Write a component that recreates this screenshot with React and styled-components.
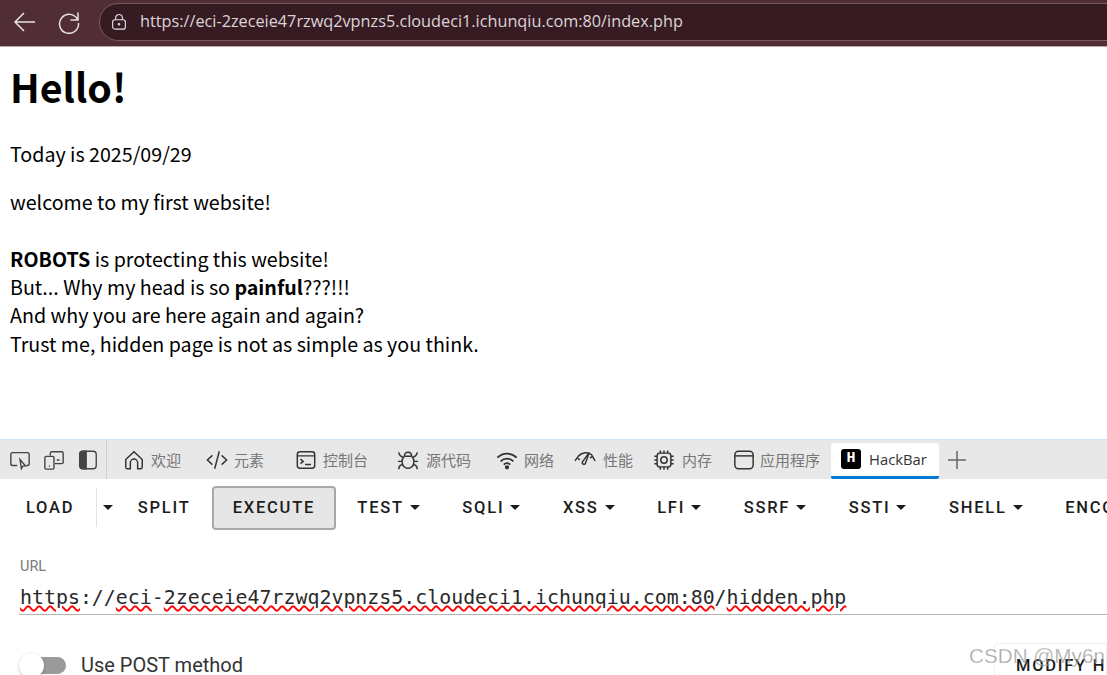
import styled, { createGlobalStyle } from "styled-components";

const Global = createGlobalStyle`
  html, body {
    margin: 0;
    padding: 0;
    background: #fff;
  }
`;

const Page = styled.div`
  position: relative;
  width: 1107px;
  height: 675px;
  overflow: hidden;
  display: flex;
  flex-direction: column;
  font-family: "Noto Sans CJK SC", "Noto Sans", sans-serif;
`;

/* browser chrome */
const AddressBar = styled.div`
  flex: none;
  height: 47px;
  box-sizing: border-box;
  display: flex;
  align-items: center;
  padding: 0 0 2px 13px;
  background: #512d35;
  border-bottom: 1px solid #b9a8ac;
  color: #e6dfe0;
`;

const NavButton = styled.div`
  display: flex;
  width: 24px;
  margin-right: 20px;
  svg {
    width: 24px;
    height: 24px;
    stroke: #e8e2e3;
    fill: none;
    stroke-width: 1.5;
  }
`;

const UrlPill = styled.div`
  flex: 1;
  height: 38px;
  box-sizing: border-box;
  margin-left: -2px;
  margin-right: -30px;
  display: flex;
  align-items: center;
  gap: 12px;
  padding-left: 10px;
  border: 1px solid #77595f;
  border-radius: 19px;
  background: #371b23;
  svg {
    width: 18px;
    height: 18px;
    stroke: #e6dfe0;
    fill: none;
    stroke-width: 1.5;
  }
`;

const UrlText = styled.span`
  padding-bottom: 3px;
  font-family: "Open Sans", sans-serif;
  font-size: 16.25px;
  color: #dcd5d6;
  white-space: nowrap;
`;

/* page body */
const Content = styled.main`
  flex: none;
  height: 392px;
  box-sizing: border-box;
  padding: 11px 10px 0;
  color: #000;
`;

const Title = styled.h1`
  margin: 0 0 26px;
  font-size: 39.3px;
  line-height: 56px;
  font-weight: 700;
`;

const Para = styled.p`
  margin: 0 0 20px;
  font-size: 19.65px;
  line-height: 28.3px;
  b {
    font-weight: 700;
  }
`;

/* devtools tab strip */
const DevTools = styled.div`
  flex: none;
  height: 40px;
  box-sizing: border-box;
  display: flex;
  align-items: stretch;
  background: #e8e8e8;
  border-top: 1px solid #cfe2fa;
`;

const ToolIcons = styled.div`
  display: flex;
  align-items: center;
  gap: 12px;
  width: 97px;
  padding-left: 9px;
  border-right: 1px solid #cfcfcf;
  svg {
    flex: none;
    width: 22px;
    height: 22px;
    fill: none;
    stroke: #444;
    stroke-width: 1.5;
  }
`;

const Tab = styled.div`
  width: ${(p) => p.$w}px;
  margin-left: ${(p) => p.$ml || 0}px;
  flex: none;
  display: flex;
  align-items: center;
  gap: ${(p) => p.$gap || 6}px;
  font-size: 15px;
  color: #777;
  svg {
    flex: none;
    width: 22px;
    height: 22px;
    fill: none;
    stroke: #333;
    stroke-width: 1.6;
  }
`;

const ActiveTab = styled.div`
  flex: none;
  width: 108px;
  box-sizing: border-box;
  margin-top: 3px;
  display: flex;
  align-items: center;
  gap: 8px;
  padding: 0 0 2px 10px;
  background: #fff;
  border-bottom: 3px solid #0078d4;
  border-radius: 3px 3px 2px 2px;
  font-family: "Open Sans", sans-serif;
  font-size: 14.8px;
  color: #333;
`;

const HackIcon = styled.span`
  flex: none;
  width: 20px;
  height: 20px;
  border-radius: 3px;
  background: #000;
  color: #fff;
  display: flex;
  align-items: center;
  justify-content: center;
  font-family: "Liberation Mono", monospace;
  font-weight: 700;
  font-size: 15px;
`;

const AddTab = styled.div`
  display: flex;
  align-items: center;
  margin-left: 8px;
  svg {
    width: 20px;
    height: 20px;
    stroke: #666;
    stroke-width: 1.5;
  }
`;

/* hackbar */
const MenuRow = styled.div`
  flex: none;
  height: 57px;
  display: flex;
  align-items: center;
  padding-left: 4.600px;
  box-sizing: border-box;
  white-space: nowrap;
`;

const MenuButton = styled.div`
  flex: none;
  height: 39px;
  display: flex;
  align-items: center;
  gap: 6px;
  padding: 0 21.300px;
  font-family: Roboto, sans-serif;
  font-weight: 500;
  font-size: 16.5px;
  letter-spacing: 1.75px;
  color: #1c1c1c;
`;

const LoadButton = styled(MenuButton)`
  border-right: 1px solid #e2e2e2;
`;

const CaretButton = styled(MenuButton)`
  padding: 0 4px 0 6px;
`;

const ExecuteButton = styled(MenuButton)`
  box-sizing: border-box;
  height: 44px;
  padding: 0 19px;
  background: #e6e6e6;
  border: 2px solid #a9a9a9;
  border-radius: 4px;
`;

const Caret = styled.i`
  width: 0;
  height: 0;
  border-left: 5px solid transparent;
  border-right: 5px solid transparent;
  border-top: 5px solid #1c1c1c;
`;

const UrlField = styled.div`
  flex: none;
  margin-left: 19px;
  height: 79px;
  box-sizing: border-box;
  padding-top: 22px;
  border-bottom: 1px solid #b4b4b4;
`;

const FieldLabel = styled.div`
  font-family: Roboto, sans-serif;
  font-size: 14.5px;
  line-height: 18px;
  color: #7a7a7a;
  padding-left: 1px;
`;

const FieldValue = styled.div`
  margin-top: 10px;
  padding-left: 1px;
  font-family: "DejaVu Sans Mono", monospace;
  font-size: 19.9px;
  line-height: 24px;
  color: #2a2a2a;
  white-space: nowrap;
`;

const Typo = styled.span`
  text-decoration: underline wavy #f00;
  text-decoration-thickness: 1.500px;
  text-underline-offset: 1px;
`;

const BottomRow = styled.div`
  flex: 1;
  display: flex;
  align-items: flex-start;
  justify-content: space-between;
  padding: 38px 0 0 19px;
`;

const PostOption = styled.div`
  display: flex;
  align-items: center;
  gap: 15px;
  font-family: Roboto, sans-serif;
  font-size: 20px;
  line-height: 24px;
  color: #333;
`;

const ToggleTrack = styled.span`
  position: relative;
  display: block;
  width: 44px;
  height: 17px;
  margin-left: 3px;
  border-radius: 9px;
  background: #9a9a9a;
`;

const ToggleThumb = styled.span`
  position: absolute;
  left: -3px;
  top: -4px;
  width: 25px;
  height: 25px;
  border-radius: 50%;
  background: #fff;
  box-shadow: 0 1px 3px rgba(0, 0, 0, 0.25);
`;

const SideCard = styled.div`
  width: 113px;
  height: 60px;
  margin-top: -10px;
  box-sizing: border-box;
  padding: 12px 0 0 21px;
  border: 1px solid #f0f0f0;
  border-radius: 4px 0 0 0;
  font-family: Roboto, sans-serif;
  font-weight: 500;
  font-size: 16.5px;
  letter-spacing: 1.75px;
  color: #1c1c1c;
  white-space: nowrap;
  overflow: hidden;
`;

const Watermark = styled.div`
  position: absolute;
  left: 969px;
  top: 642px;
  font-family: "Liberation Sans", sans-serif;
  font-size: 20.7px;
  line-height: 28px;
  color: rgba(120, 120, 120, 0.6);
  -webkit-text-stroke: 0.3px rgba(255, 255, 255, 0.6);
  white-space: nowrap;
`;

const icons = {
  home: (
    <svg viewBox="0 0 24 24">
      <path d="M3 11.500 12 3l9 8.500V20a1.500 1.500 0 0 1-1.500 1.500H16V15a4 4 0 0 0-8 0v6.500H4.500A1.500 1.500 0 0 1 3 20z" />
    </svg>
  ),
  code: (
    <svg viewBox="0 0 24 24">
      <path d="M7 7l-5.500 5L7 17M17 7l5.500 5L17 17M14.500 2.500l-5 19" />
    </svg>
  ),
  console: (
    <svg viewBox="0 0 24 24">
      <rect x="2.500" y="3" width="19" height="18" rx="3" />
      <path d="M2.500 7.500h19M6 11l3 2.500L6 16M11 17h6.500" />
    </svg>
  ),
  bug: (
    <svg viewBox="0 0 24 24">
      <path d="M8 8c0-6 8-6 8 0 2 2 2.500 4 2.500 6 0 4-3 7-6.500 7s-6.500-3-6.500-7c0-2 .5-4 2.500-6z" />
      <path d="M8 8h8M2 3.500c0 3 2 4.500 4.500 5.500M22 3.500c0 3-2 4.500-4.500 5.500M1 13.500h4.500M23 13.500h-4.500M2 22c0-3 2-4.500 4-5M22 22c0-3-2-4.500-4-5" />
    </svg>
  ),
  wifi: (
    <svg viewBox="0 0 24 24" style={{ strokeWidth: 2 }}>
      <path d="M1.500 9.500c6-6 15-6 21 0M5 13.500c4-4 10-4 14 0M8.500 17c2-2 5-2 7 0" />
      <circle cx="12" cy="20" r="1.300" fill="#333" />
    </svg>
  ),
  gauge: (
    <svg viewBox="0 0 24 24">
      <path d="M1 13l4-5.500C9 3.500 15 3 19 6l4 7M3.500 9.500l3 2.500M20 8l-2.500 2" />
      <path d="M16.500 4 12.500 15.500a1.800 1.800 0 0 1-3.400-1.200z" />
    </svg>
  ),
  cpu: (
    <svg viewBox="0 0 24 24">
      <rect x="4.500" y="4.500" width="15" height="15" rx="3" />
      <circle cx="12" cy="12" r="3.500" />
      <path d="M8 1.500v3M12 1.500v3M16 1.500v3M8 19.500v3M12 19.500v3M16 19.500v3M1.500 8h3M1.500 12h3M1.500 16h3M19.500 8h3M19.500 12h3M19.500 16h3" />
    </svg>
  ),
  app: (
    <svg viewBox="0 0 24 24">
      <rect x="2" y="2.500" width="20" height="19" rx="4" />
      <path d="M2 7.500h20" />
    </svg>
  ),
};

const tabs = [
  { key: "home", label: "欢迎", w: 83, ml: 16 },
  { key: "code", label: "元素", w: 89 },
  { key: "console", label: "控制台", w: 102 },
  { key: "bug", label: "源代码", w: 99, gap: 7 },
  { key: "wifi", label: "网络", w: 78 },
  { key: "gauge", label: "性能", w: 79, gap: 7 },
  { key: "cpu", label: "内存", w: 80, gap: 7 },
  { key: "app", label: "应用程序", w: 98, gap: 5 },
];

const menus = ["TEST", "SQLI", "XSS", "LFI", "SSRF", "SSTI", "SHELL", "ENCODING"];

export default function App() {
  return (
    <Page>
      <Global />
      <AddressBar>
        <NavButton>
          <svg viewBox="0 0 24 24">
            <path d="M22 12H2M11 3l-9 9 9 9" />
          </svg>
        </NavButton>
        <NavButton>
          <svg viewBox="0 0 24 24">
            <path d="M20.500 9.500A9.500 9.500 0 1 0 21.500 13M21 2.500v7.500h-7.500" />
          </svg>
        </NavButton>
        <UrlPill>
          <svg viewBox="0 0 24 24">
            <rect x="3.500" y="9" width="17" height="12.500" rx="3" />
            <path d="M7.500 9V6.500a4.500 4.500 0 0 1 9 0V9" />
            <circle cx="12" cy="15" r="1" />
          </svg>
          <UrlText>https://eci-2zeceie47rzwq2vpnzs5.cloudeci1.ichunqiu.com:80/index.php</UrlText>
        </UrlPill>
      </AddressBar>

      <Content>
        <Title>Hello!</Title>
        <Para>Today is 2025/09/29</Para>
        <Para>
          welcome to my first website!
          <br />
          <br />
          <b>ROBOTS</b> is protecting this website!
          <br />
          But... Why my head is so <b>painful</b>???!!!
          <br />
          And why you are here again and again?
          <br />
          Trust me, hidden page is not as simple as you think.
        </Para>
      </Content>

      <DevTools>
        <ToolIcons>
          <svg viewBox="0 0 24 24">
            <path d="M9 18H4a2 2 0 0 1-2-2V6a2 2 0 0 1 2-2h16a2 2 0 0 1 2 2v10a2 2 0 0 1-2 2h-1" />
            <path d="M12 11.500l6 7-3 .2-1.500 2.800z" />
          </svg>
          <svg viewBox="0 0 24 24">
            <path d="M8 7V4.500A1.500 1.500 0 0 1 9.500 3h11A1.500 1.500 0 0 1 22 4.500v10a1.500 1.500 0 0 1-1.500 1.500H13M15 12h3" />
            <rect x="2" y="8" width="10" height="14" rx="1.500" />
            <path d="M6.500 18.500h1" />
          </svg>
          <svg viewBox="0 0 24 24">
            <rect x="3" y="2.500" width="18" height="19" rx="3.500" />
            <path d="M3 6a3.500 3.500 0 0 1 3.500-3.500H10v19H6.500A3.500 3.500 0 0 1 3 18z" fill="#444" />
          </svg>
        </ToolIcons>
        {tabs.map((t) => (
          <Tab key={t.key} $w={t.w} $ml={t.ml} $gap={t.gap}>
            {icons[t.key]}
            {t.label}
          </Tab>
        ))}
        <ActiveTab>
          <HackIcon>H</HackIcon>
          HackBar
        </ActiveTab>
        <AddTab>
          <svg viewBox="0 0 20 20">
            <path d="M1 10h18M10 1v18" />
          </svg>
        </AddTab>
      </DevTools>

      <MenuRow>
        <LoadButton>LOAD</LoadButton>
        <CaretButton>
          <Caret />
        </CaretButton>
        <MenuButton>SPLIT</MenuButton>
        <ExecuteButton>EXECUTE</ExecuteButton>
        {menus.map((m) => (
          <MenuButton key={m}>
            {m}
            <Caret />
          </MenuButton>
        ))}
      </MenuRow>

      <UrlField>
        <FieldLabel>URL</FieldLabel>
        <FieldValue>
          <Typo>https</Typo>://<Typo>eci</Typo>-<Typo>2zeceie47rzwq2vpnzs5.cloudeci1.ichunqiu.com:80</Typo>/
          <Typo>hidden.php</Typo>
        </FieldValue>
      </UrlField>

      <BottomRow>
        <PostOption>
          <ToggleTrack>
            <ToggleThumb />
          </ToggleTrack>
          Use POST method
        </PostOption>
        <SideCard>MODIFY HEADER</SideCard>
      </BottomRow>

      <Watermark>CSDN @My6n</Watermark>
    </Page>
  );
}
